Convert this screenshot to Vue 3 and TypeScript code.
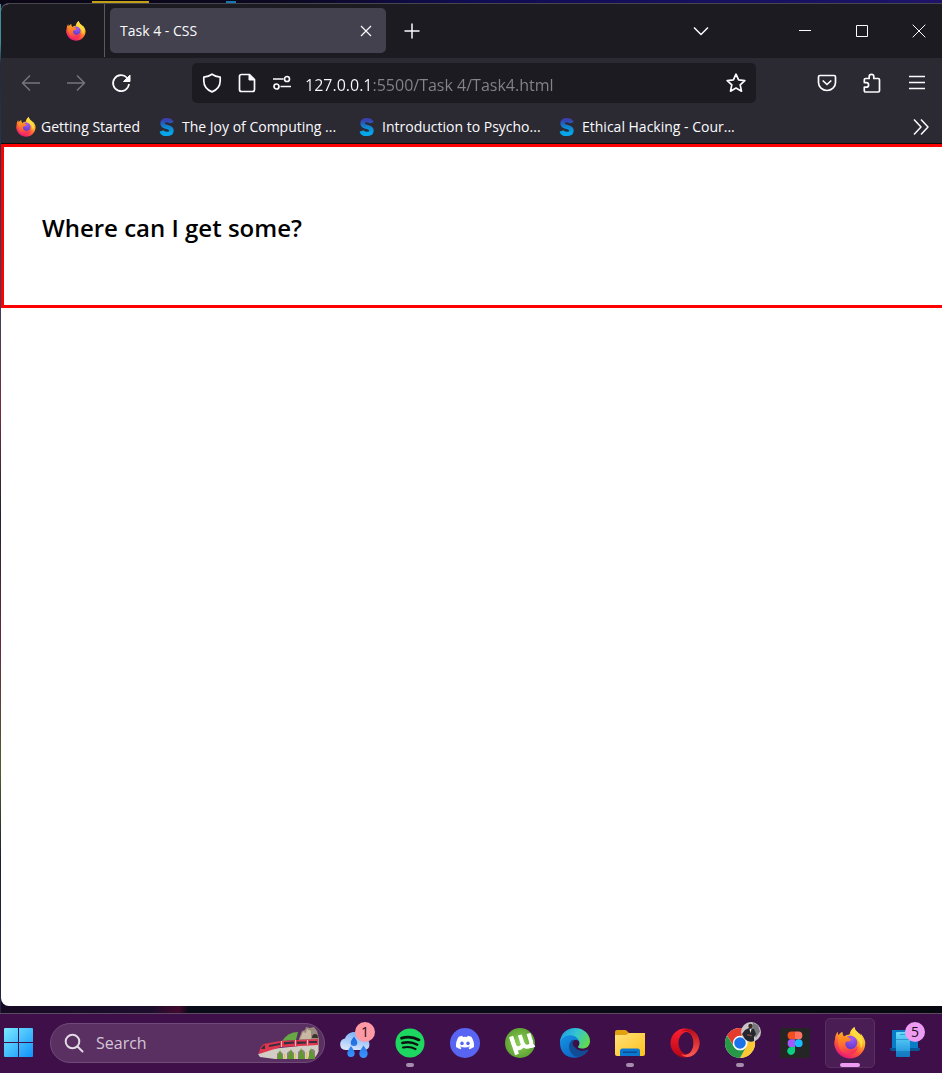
<script setup lang="ts">
import { ref } from 'vue'

interface Bookmark {
  title: string
  icon: string
  full: boolean
}

interface TaskApp {
  name: string
  icon: string
  state?: 'open' | 'active'
  badge?: string
  tone?: string
}

const address = ref('127.0.0.1:5500/Task 4/Task4.html')
const query = ref('')

const bookmarks: Bookmark[] = [
  { title: 'Getting Started', icon: 'firefox', full: true },
  { title: 'The Joy of Computing ...', icon: 'swayam', full: false },
  { title: 'Introduction to Psycho...', icon: 'swayam', full: false },
  { title: 'Ethical Hacking - Cour...', icon: 'swayam', full: false },
]

const apps: TaskApp[] = [
  { name: 'Weather', icon: 'weather', badge: '1', tone: 'coral' },
  { name: 'Spotify', icon: 'spotify', state: 'open' },
  { name: 'Discord', icon: 'discord' },
  { name: 'uTorrent', icon: 'utorrent' },
  { name: 'Edge', icon: 'edge' },
  { name: 'File Explorer', icon: 'folder', state: 'open' },
  { name: 'Opera', icon: 'opera' },
  { name: 'Chrome', icon: 'chrome', state: 'open' },
  { name: 'Figma', icon: 'figma' },
  { name: 'Firefox', icon: 'firefox', state: 'active' },
  { name: 'Phone Link', icon: 'phone', badge: '5', tone: 'orchid' },
]
</script>

<template>
  <div class="desktop">
    <svg class="sprite" aria-hidden="true">
      <defs>
        <linearGradient id="ff-body" x1="0.8" y1="0.05" x2="0.3" y2="1">
          <stop offset="0" stop-color="#fff44f" />
          <stop offset="0.35" stop-color="#ffb02a" />
          <stop offset="0.65" stop-color="#ff5a36" />
          <stop offset="1" stop-color="#e6107f" />
        </linearGradient>
        <linearGradient id="ff-fox" x1="0.3" y1="0" x2="0.5" y2="1">
          <stop offset="0" stop-color="#ff9a1f" />
          <stop offset="0.5" stop-color="#ff6a32" />
          <stop offset="1" stop-color="#f52a62" />
        </linearGradient>
        <radialGradient id="ff-globe" cx="0.6" cy="0.2" r="0.9">
          <stop offset="0" stop-color="#a45cf5" />
          <stop offset="1" stop-color="#5b35c4" />
        </radialGradient>
        <linearGradient id="sw" x1="0" y1="0" x2="0" y2="1">
          <stop offset="0" stop-color="#3a3fae" />
          <stop offset="0.5" stop-color="#0f86cf" />
          <stop offset="1" stop-color="#04a8ec" />
        </linearGradient>
        <linearGradient id="win" x1="0" y1="0" x2="1" y2="1">
          <stop offset="0" stop-color="#7beaff" />
          <stop offset="1" stop-color="#0f93fb" />
        </linearGradient>
        <linearGradient id="cloud" x1="0.6" y1="0" x2="0.3" y2="1">
          <stop offset="0" stop-color="#78b0fa" />
          <stop offset="0.5" stop-color="#a9cbfb" />
          <stop offset="1" stop-color="#dbe6f8" />
        </linearGradient>
        <linearGradient id="drop" x1="0" y1="0" x2="0" y2="1">
          <stop offset="0" stop-color="#1d66d8" />
          <stop offset="1" stop-color="#3a95ff" />
        </linearGradient>
        <radialGradient id="ut">
          <stop offset="0" stop-color="#8fcf5c" />
          <stop offset="1" stop-color="#5fa332" />
        </radialGradient>
        <linearGradient id="edge-top" x1="0" y1="0.2" x2="1" y2="0.6">
          <stop offset="0" stop-color="#1b9de2" />
          <stop offset="0.5" stop-color="#35c5d2" />
          <stop offset="1" stop-color="#61dc4b" />
        </linearGradient>
        <linearGradient id="edge-left" x1="0" y1="0" x2="0.6" y2="1">
          <stop offset="0" stop-color="#1698e6" />
          <stop offset="1" stop-color="#0c65c6" />
        </linearGradient>
        <linearGradient id="fold" x1="0" y1="0" x2="1" y2="1">
          <stop offset="0" stop-color="#ffe07a" />
          <stop offset="1" stop-color="#fdc21c" />
        </linearGradient>
        <linearGradient id="op" x1="0" y1="0" x2="0" y2="1">
          <stop offset="0" stop-color="#ff1f30" />
          <stop offset="1" stop-color="#b50716" />
        </linearGradient>
        <linearGradient id="op2" x1="0" y1="0" x2="0" y2="1">
          <stop offset="0" stop-color="#b80d17" />
          <stop offset="1" stop-color="#ff5a52" />
        </linearGradient>
        <linearGradient id="ph" x1="0" y1="0" x2="0" y2="1">
          <stop offset="0" stop-color="#68dcfa" />
          <stop offset="1" stop-color="#1689d8" />
        </linearGradient>
      </defs>

      <symbol id="firefox" viewBox="0 0 32 32">
        <path fill="url(#ff-body)" d="M29.700 11.100C28.900 9.200 27.600 7.500 26.300 6.600c.5 1 .7 1.800.8 2.500C25.500 5.500 20.900 4.800 20.400 0c-3.200 1.900-4.600 5.200-4.800 7.600-2 .1-3.900.8-5.400 1.900C8.700 8.500 8.400 5.400 8.500 4.700 6.400 5.700 5.200 7 4.500 8.200 3.800 7.300 3.800 5.600 3.900 4.600 1.900 6.700 1 9.600 1 12.300c-1 2.500-.7 5.600-.3 7C2.400 26.500 8.600 31.500 16 31.500c8.400 0 15.300-6.600 15.300-15.200 0-1.900-.7-3.700-1.600-5.200z" />
        <circle cx="16.500" cy="15.500" r="6.800" fill="url(#ff-globe)" />
        <path fill="url(#ff-fox)" d="M4.500 8.200c1.500-.6 3.400-.5 5.700 1.300 1.400-.2 2.800.1 4.100.8 1.700.9 2.500 2 2.500 2.600 0 1-1.900 1.500-3.600 1.700-1 .2-1.700 1.200-2 2.500.5 3.500 3 5.200 6 5.200 3 0 5-1.600 6.300-3.800.8 3.500-1 7-4.500 8.500-2.500.8-5.500.8-8 0C6.400 25.500 4 20.200 4 13.800c0-2.200.1-4 .5-5.600z" />
        <path fill="#ffdc3d" d="M20.400 0c.5 4.800 5.100 5.500 6.700 9.100 2.200 4.400 1.900 9-.3 12.400 0-3.500-.8-6.300-3-9-2-2.300-4.900-2.900-6.500-5.800-.1-2.500 1.300-5.400 3.100-6.700z" />
      </symbol>
      <symbol id="swayam" viewBox="0 0 20 20">
        <path d="M14.500 5.800C14 3.900 12.500 3.100 10 3.100c-2.900 0-4.500 1.300-4.500 3.300 0 4.600 9 2.400 9 7 0 2.200-1.900 3.500-4.900 3.500-2.800 0-4.400-1-4.900-3" fill="none" stroke="url(#sw)" stroke-width="4.400" />
      </symbol>
      <symbol id="windows" viewBox="0 0 30 30">
        <path fill="url(#win)" d="M1 0h13v14H0V1q0-1 1-1zM15 0h13q1 0 1 1v13H15zM0 15h14v14H1q-1 0-1-1zM15 15h14v13q0 1-1 1H15z" />
      </symbol>
      <symbol id="weather" viewBox="0 0 32 32">
        <path fill="url(#cloud)" d="M6.500 23a5.800 5.800 0 0 1-.5-11.500C7.500 7.500 11 5 15.500 5c5 0 8.500 2.800 9.800 6.500A5.800 5.800 0 0 1 25.500 23z" />
        <path fill="url(#drop)" d="M15 9.500c2 2.800 3.300 4.500 3.300 6.200a3.300 3.300 0 0 1-6.600 0c0-1.700 1.300-3.400 3.300-6.200zM12 19c2 3 3.700 5 3.700 7.300a3.700 3.700 0 0 1-7.400 0C8.300 24 10 22 12 19zM24.500 18.500c2.500 3.500 4.200 5.500 4.200 8.200a4.200 4.200 0 0 1-8.400 0c0-2.700 1.700-4.700 4.200-8.200z" />
      </symbol>
      <symbol id="spotify" viewBox="0 0 32 32">
        <circle cx="16" cy="16" r="14.500" fill="#1ed760" />
        <g fill="none" stroke="#0b1410" stroke-linecap="round">
          <path d="M7.500 11.200c5.500-1.700 12.500-1 17.500 1.700" stroke-width="2.800" />
          <path d="M8.300 16c5-1.400 10.500-.8 15 1.700" stroke-width="2.400" />
          <path d="M9 20.500c4.300-1.100 8.800-.6 12.600 1.600" stroke-width="2" />
        </g>
      </symbol>
      <symbol id="discord" viewBox="0 0 32 32">
        <circle cx="16" cy="16" r="15" fill="#5865f2" />
        <path fill="#fff" d="M22.300 9.800A15 15 0 0 0 18.700 8.700l-.6 1.200a14 14 0 0 0-4.200 0l-.6-1.200a15 15 0 0 0-3.600 1.100C7.400 13.200 6.800 16.600 7 20a15 15 0 0 0 4.600 2.300l1-1.600-1.500-.8.4-.3c2.900 1.300 6.100 1.300 9 0l.4.3-1.500.8 1 1.600A15 15 0 0 0 25 20c.4-3.900-.7-7.300-2.700-10.200z" />
        <ellipse cx="13" cy="16.300" rx="1.700" ry="1.900" fill="#5865f2" />
        <ellipse cx="19" cy="16.300" rx="1.700" ry="1.900" fill="#5865f2" />
      </symbol>
      <symbol id="utorrent" viewBox="0 0 32 32">
        <circle cx="16" cy="16" r="15" fill="url(#ut)" />
        <path d="M7 9.500l6 18" fill="none" stroke="#fff" stroke-width="4" />
        <path d="M7.500 10.500l2.500 7.500q2 4.500 6 2.800t2.300-5l-2.500-7.800M18.500 16q2.200 4.800 6 3.500t2.500-5L24.500 6.500" fill="none" stroke="#fff" stroke-width="4" />
        <path d="M25 19.500q3 .5 5.500-1.200" fill="none" stroke="#fff" stroke-width="3" />
      </symbol>
      <symbol id="edge" viewBox="0 0 32 32">
        <path fill="url(#edge-left)" d="M1 16C1 8 8 5 14 7c5 1.500 7 5 6.500 8-1-1.500-2.700-2.300-4.500-2-4 .5-5.500 5-3.500 9 2.200 4.400 7.500 6.800 11.500 5.500C17 34 1 31 1 16z" />
        <path fill="url(#edge-top)" d="M1 15C1.500 6.500 8 1 16 1c9 0 15 6.500 15 13 0 5-3.500 7.500-7.500 7.500-3.500 0-5.500-1.300-4-2.800 1.500-1.700 1-5-1-7.200C13.500 6 4 8 1 15z" />
        <path fill="#124c94" d="M12.500 13.500C9 17 9.500 23.500 13.500 27.500c4.500 4 12 2.500 15.800-4.300.3-.7-.2-1-.8-.6-5 2.500-11 1.300-13-2.800-1-2.200-.7-4.500.5-6.500-1.200-.8-2.500-.6-3.500.2z" />
        <circle cx="17" cy="16.500" r="3.200" fill="#3f0f49" />
      </symbol>
      <symbol id="folder" viewBox="0 0 32 32">
        <path fill="#e0a010" d="M1 5q0-2 2-2h8q1 0 2 1l2 2h14q1 0 1 1v10H1z" />
        <path fill="url(#fold)" d="M1 8h11l3-2h16v21q0 2-2 2H3q-2 0-2-2z" />
        <path fill="#0b78d1" d="M6 29v-5q0-2.500 2.500-2.500h15Q26 21.500 26 24v5z" />
        <path fill="#0a4d94" d="M9 24.500h14v1.500H9z" />
      </symbol>
      <symbol id="opera" viewBox="0 0 32 32">
        <path fill="url(#op)" fill-rule="evenodd" d="M16 1.500a14.500 14.500 0 0 0 0 29 14.500 14.500 0 0 0 0-29zM17.500 5c4 0 7 5 7 11s-3 11-7 11-8-5-8-11 4-11 8-11z" />
        <path fill="url(#op2)" d="M12 5C15 1.500 20.500 1.200 24.500 4c3.700 2.700 6 7.200 6 12s-2.300 9.300-6 12c-4 2.800-9.500 2.500-12.500-1 8 3.500 12.500-4 12.500-11S20 1.500 12 5z" />
      </symbol>
      <symbol id="chrome" viewBox="0 0 32 32">
        <circle cx="16" cy="16" r="15" fill="#fff" />
        <path fill="#e33b2e" d="M3 8.500a15 15 0 0 1 26 0L16 9.200a7 7 0 0 0-6 10.300z" />
        <path fill="#fcc934" d="M29 8.500A15 15 0 0 1 16 31l6.200-11.500A7 7 0 0 0 16 8.500z" />
        <path fill="#279847" d="M3 8.500A15 15 0 0 0 16 31l6.300-11.300A7 7 0 0 1 10 19.700z" />
        <circle cx="16" cy="16" r="7.200" fill="#fff" />
        <circle cx="16" cy="16" r="5.800" fill="#1a73e8" />
      </symbol>
      <symbol id="figma" viewBox="0 0 32 32">
        <path fill="#252525" d="M1 1h30v30H1z" />
        <path fill="#f24e1e" d="M16 4.500h-3.500a3.900 3.900 0 0 0 0 7.800H16z" />
        <path fill="#ff7262" d="M16 4.500h3.500a3.900 3.900 0 0 1 0 7.800H16z" />
        <path fill="#a259ff" d="M16 12.300h-3.500a3.900 3.900 0 0 0 0 7.800H16z" />
        <circle cx="19.700" cy="16.200" r="3.900" fill="#1abcfe" />
        <path fill="#0acf83" d="M16 20.100h-3.500a3.900 3.900 0 1 0 3.500 3.900z" />
      </symbol>
      <symbol id="phone" viewBox="0 0 32 32">
        <path fill="#087cc6" d="M3 3h26v18H3z" />
        <path fill="#0a5596" d="M1 21h30v1q0 2-2 2H3q-2 0-2-2z" />
        <path fill="url(#ph)" d="M8 5h12q1 0 1 1v23q0 1-1 1H8q-1 0-1-1V6q0-1 1-1z" />
        <path fill="#0d67ae" d="M11 7h5v1h-5zM7 12h14v1H7zM7 24h14v6H7z" opacity="0.500" />
      </symbol>
    </svg>

    <main class="window">
      <header class="tabs">
        <button class="pin" aria-label="Firefox View">
          <svg viewBox="0 0 32 32"><use href="#firefox" /></svg>
        </button>
        <div class="tab">
          <span class="tab-title">Task 4 - CSS</span>
          <button class="tab-close" aria-label="Close tab">
            <svg viewBox="0 0 12 12"><path d="M1 1l10 10M11 1L1 11" /></svg>
          </button>
        </div>
        <button class="new-tab" aria-label="New tab">
          <svg viewBox="0 0 16 16"><path d="M8 .500v15M.5 8h15" /></svg>
        </button>
        <button class="list-tabs" aria-label="List all tabs">
          <svg viewBox="0 0 16 16"><path d="M1 4.500l7 7 7-7" /></svg>
        </button>
        <div class="controls">
          <button aria-label="Minimize"><svg class="thin" viewBox="0 0 14 14"><path d="M1 6.500h12" /></svg></button>
          <button aria-label="Maximize"><svg class="thin" viewBox="0 0 14 14"><path d="M1.500 1.500h11v11h-11z" /></svg></button>
          <button aria-label="Close window"><svg class="thin" viewBox="0 0 14 14"><path d="M.7.700l12.600 12.600M13.300.700L.7 13.300" /></svg></button>
        </div>
      </header>

      <nav class="toolbar" aria-label="Navigation">
        <div class="group">
          <button class="dim" aria-label="Back"><svg viewBox="0 0 20 20"><path d="M19 10H1.500M9 2.500L1.500 10 9 17.500" /></svg></button>
          <button class="dim" aria-label="Forward"><svg viewBox="0 0 20 20"><path d="M1 10h17.500M11 2.500l7.500 7.500-7.500 7.500" /></svg></button>
          <button aria-label="Reload">
            <svg class="bold" viewBox="0 0 20 20"><path d="M16 4.800A8 8 0 1 0 18 11" /><path class="tip" d="M19 2v6.500h-6.500z" /></svg>
          </button>
        </div>
        <div class="urlbar">
          <button aria-label="Tracking protection"><svg class="bold" viewBox="0 0 20 20"><path d="M10 1.200c2.500 1.700 5 2.500 8.200 3v3.500c0 5-3 9-8.200 11.200-5.200-2.200-8.200-6.200-8.200-11.200V4.200c3.200-.5 5.700-1.300 8.200-3z" /></svg></button>
          <button aria-label="Site information"><svg class="bold" viewBox="0 0 20 20"><path d="M4.500 1.500h8l5 5v10q0 2-2 2h-11q-2 0-2-2v-13q0-2 2-2z" /><path class="tip" d="M12 1.500v5.500h5.500z" /></svg></button>
          <button aria-label="Permissions"><svg class="bold" viewBox="0 0 20 20"><path d="M1 6h10.500M8.500 13.500H19" /><circle cx="15" cy="6" r="2.500" /><circle cx="4.500" cy="13.500" r="2.500" /></svg></button>
          <input v-model="address" class="address" type="text" aria-label="Address" spellcheck="false" />
          <button aria-label="Bookmark this page"><svg class="bold" viewBox="0 0 20 20"><path d="M10 1.200l2.600 5.700 6.200.7-4.600 4.200 1.300 6.400L10 15.100l-5.500 3.100 1.300-6.400L1.200 7.600l6.200-.7z" /></svg></button>
        </div>
        <div class="group">
          <button aria-label="Save to Pocket"><svg class="bold" viewBox="0 0 20 20"><path d="M3 2.500h14q1.500 0 1.500 1.500v5.500a8.500 8 0 0 1-17 0V4q0-1.500 1.500-1.500z" /><path d="M5.700 7.500L10 11.500l4.300-4" /></svg></button>
          <button aria-label="Extensions"><svg class="bold" viewBox="0 0 20 20"><path d="M3.500 19q-1.200 0-1.200-1.200v-3.600h2a2.300 2.300 0 0 0 0-4.600h-2V6.800q0-1.300 1.200-1.300h3.700V3.600a2.300 2.300 0 0 1 4.600 0v1.900h4.400q1.300 0 1.300 1.300v11q0 1.200-1.300 1.200z" /></svg></button>
          <button aria-label="Menu"><svg viewBox="0 0 20 20"><path d="M2 3.500h16M2 9.500h16M2 15.500h16" /></svg></button>
        </div>
      </nav>

      <nav class="bookmarks" aria-label="Bookmarks">
        <a v-for="mark in bookmarks" :key="mark.title" href="#" class="mark" :class="{ full: mark.full }">
          <svg viewBox="0 0 20 20"><use :href="'#' + mark.icon" /></svg>
          <span>{{ mark.title }}</span>
        </a>
        <button class="more" aria-label="More bookmarks"><svg viewBox="0 0 18 18"><path d="M2 1.500L9 9l-7 7.500M9 1.500L16 9l-7 7.500" /></svg></button>
      </nav>

      <section class="page">
        <div class="box"><h2>Where can I get some?</h2></div>
      </section>
    </main>

    <footer class="taskbar">
      <button class="start" aria-label="Start"><svg viewBox="0 0 30 30"><use href="#windows" /></svg></button>
      <label class="search">
        <svg class="lens" viewBox="0 0 20 20"><circle cx="8.500" cy="8.500" r="6.800" /><path d="M13.500 13.500l5 5" /></svg>
        <input v-model="query" type="search" placeholder="Search" aria-label="Search" />
        <svg class="train" viewBox="0 0 64 36">
          <path fill="#9a8c7c" d="M42 14l3-8 3-1 1-3 4 1 4-1 3 4 2 8v13H42z" />
          <path fill="#c9b9a2" d="M43 14l3-7 3 1 1-4 4 2v8z" />
          <path fill="#3a322e" d="M55 13q0-4 3-4t3 4z" />
          <path fill="#65a844" d="M25 16q6-9 16-9l-2 8z" />
          <path fill="#d3cec5" d="M1 29l13-5 47-5v9l-4 6H18L3 32z" />
          <path fill="#8d8175" d="M20 34v-5q3-5 6 0v5zM30 34v-6q4-5 7 0v6zM41 34v-7q4-5 7 0v7zM52 34v-8q4-4 6 0v8z" />
          <path fill="#5f9a2c" d="M20 34l3-9 3 9zM30 34l4-10 3 10zM41 34l3-11 4 11zM51 34l3-11 4 11z" />
          <path fill="#e5c642" d="M27 29h1v5h-1zM38 28h1v6h-1zM49 27h1v7h-1z" />
          <path fill="#e0344f" d="M2 28q1-7 5-9l16-3 38-2v6l-37 2-19 6q-2 1-3 0z" />
          <path fill="#33313f" d="M4 24q1-3 4-4v4zM12 20l11-2v2l-11 2zM27 17l10-.500v2l-10 1zM40 16.500h9v2l-9 .500zM52 16h8v2h-8z" />
          <path fill="#f0b7bd" d="M24 16h1v6h-1zM38 15h1v6h-1zM50 15h1v5h-1z" />
        </svg>
      </label>
      <button v-for="app in apps" :key="app.name" class="app" :class="app.state" :aria-label="app.name">
        <svg class="glyph" viewBox="0 0 32 32"><use :href="'#' + app.icon" /></svg>
        <span v-if="app.badge" class="badge" :class="app.tone">{{ app.badge }}</span>
        <svg v-if="app.icon === 'chrome'" class="avatar" viewBox="0 0 20 20">
          <circle cx="10" cy="10" r="10" fill="#c8c5c8" />
          <path fill="#77787b" d="M12 .500l5 3 2 6-4 6-4-5z" />
          <path fill="#24252d" d="M4 8l4-2 5 1 2 5-2 3v4q-5 2-9-2l-3-5z" />
          <circle cx="9.500" cy="4" r="2.200" fill="#3e2a25" />
          <path fill="#eee" d="M8.500 7h2l-1 4z" />
          <path fill="#754e42" d="M6 12l5 1v1.500l-5-1z" />
        </svg>
      </button>
    </footer>
  </div>
</template>

<style>
body {
  margin: 0;
}
</style>

<style scoped>
.desktop {
  display: flex;
  flex-direction: column;
  min-height: 100vh;
  overflow: hidden;
  font-family: "Open Sans", "Noto Sans", sans-serif;
  background:
    linear-gradient(#c4a014, #c4a014) 92px 1px / 57px 3px no-repeat,
    linear-gradient(#1479ae, #1479ae) 226px 1px / 10px 3px no-repeat,
    linear-gradient(90deg, #0b0716, #0b0820 30%, #100c52 50%, #1d1468) 0 0 / 100% 4px no-repeat,
    linear-gradient(#3c8f9b 4%, #26283c 6%, #1c4a6c 24%, #7a2b3c 38%, #20222f 48%, #6b2840 60%, #4f5d2c 72%, #1d2030 80%, #26294e) 0 0 / 1px 100% no-repeat,
    linear-gradient(90deg, #170a24, #1b0d2c 16%, #42092e 19%, #0a0b18 20%, #07080f);
}

.sprite {
  position: absolute;
  width: 0;
  height: 0;
}

button {
  display: flex;
  align-items: center;
  justify-content: center;
  flex: none;
  margin: 0;
  padding: 0;
  border: 0;
  background: none;
  color: #fbfbfe;
  font: inherit;
}

svg {
  display: block;
  flex: none;
}

button svg {
  fill: none;
  stroke: currentColor;
  stroke-width: 1.5;
  stroke-linejoin: round;
}

.pin svg,
.start svg,
.app svg {
  stroke: none;
  fill: currentColor;
}

.window {
  display: flex;
  flex: 1;
  flex-direction: column;
  overflow: hidden;
  margin: 3px 0 7px 1px;
  border-top: 1px solid #47464d;
  border-radius: 8px 0 0 8px;
  background: #fff;
}

.tabs {
  display: flex;
  align-items: center;
  height: 54px;
  padding-bottom: 1px;
  box-sizing: border-box;
  background: #1c1b22;
}

.pin {
  align-self: stretch;
  width: 104px;
  padding-left: 46px;
  border-right: 1px solid #5a5960;
}

.pin svg {
  width: 20px;
  height: 20px;
}

.tab {
  display: flex;
  align-items: center;
  justify-content: space-between;
  flex: 0 1 276px;
  height: 45px;
  margin-left: 5px;
  padding: 0 10px;
  box-sizing: border-box;
  border-radius: 5px;
  background: #42414d;
  color: #fbfbfe;
  font-size: 14px;
}

.tab-close {
  width: 20px;
  height: 20px;
}

.tab-close svg {
  width: 12px;
  height: 12px;
  stroke-width: 1.2;
}

.new-tab {
  width: 44px;
  height: 44px;
  margin-left: 4px;
}

.new-tab svg,
.list-tabs svg {
  width: 16px;
  height: 16px;
}

.list-tabs {
  width: 44px;
  height: 44px;
  margin-left: auto;
  margin-right: 53px;
}

.controls {
  display: flex;
  margin-right: -5px;
}

.controls button {
  width: 57px;
  height: 44px;
}

.thin {
  width: 14px;
  height: 14px;
}

button .thin {
  stroke-width: 1;
}

.toolbar {
  display: flex;
  align-items: center;
  height: 50px;
  padding: 0 3px 0 8px;
  background: #2b2a33;
}

.group {
  display: flex;
  gap: 1px;
}

.group button {
  width: 44px;
  height: 40px;
}

.group svg,
.urlbar svg {
  width: 20px;
  height: 20px;
}

.group .dim {
  color: #76757c;
}

button .bold {
  stroke-width: 1.7;
}

button .tip {
  fill: currentColor;
  stroke-width: 1;
}

.urlbar {
  display: flex;
  align-items: center;
  flex: 1;
  min-width: 0;
  height: 40px;
  margin: 0 49px;
  padding: 0 3px 0 2px;
  border-radius: 5px;
  background: #1c1b22;
}

.urlbar button {
  width: 35px;
  height: 35px;
}

.address {
  flex: 1;
  min-width: 0;
  height: 36px;
  margin: 0;
  padding: 4px 0 0 6px;
  box-sizing: border-box;
  border: 0;
  outline: 0;
  background: linear-gradient(90deg, #fbfbfe 73px, #85848b 73px);
  background-clip: text;
  -webkit-background-clip: text;
  color: transparent;
  font-family: inherit;
  font-size: 16px;
}

.bookmarks {
  display: flex;
  align-items: center;
  gap: 15px;
  height: 33px;
  padding: 2px 12px 0 15px;
  border-bottom: 1px solid #0c0c0d;
  background: #2b2a33;
}

.mark {
  display: flex;
  align-items: center;
  flex: 0 1 185px;
  gap: 5px;
  color: #fbfbfe;
  font-size: 14px;
  line-height: 20px;
  text-decoration: none;
  white-space: nowrap;
}

.mark.full {
  flex-basis: 126px;
}

.mark svg {
  width: 20px;
  height: 20px;
}

.more {
  margin-left: auto;
}

.more svg {
  width: 18px;
  height: 18px;
}

.box {
  display: flex;
  align-items: center;
  height: 154px;
  padding: 4px 0 0 38px;
  border: 3px solid #f00;
  border-right: 0;
}

.box h2 {
  margin: 0;
  color: #000;
  font-size: 24px;
  font-weight: 600;
  line-height: 32px;
}

.taskbar {
  display: flex;
  align-items: center;
  height: 60px;
  padding-bottom: 1px;
  box-sizing: border-box;
  border-top: 1px solid #5c4a63;
  background: #3f0f49;
}

.start {
  width: 38px;
  height: 50px;
  margin-right: 12px;
}

.start svg {
  width: 30px;
  height: 30px;
}

.search {
  display: flex;
  align-items: center;
  flex: 0 1 275px;
  min-width: 0;
  height: 40px;
  margin-right: 5px;
  padding: 0 3px 0 13px;
  box-sizing: border-box;
  border: 1px solid #6f4c78;
  border-radius: 20px;
  background: #5a3062;
}

.lens {
  width: 20px;
  height: 20px;
  fill: none;
  stroke: #e2dae4;
  stroke-width: 2;
  stroke-linecap: round;
}

.search input {
  flex: 1 1 0;
  width: 0;
  min-width: 0;
  margin: 0;
  padding: 0 0 0 12px;
  border: 0;
  outline: 0;
  background: none;
  color: #fff;
  font-family: inherit;
  font-size: 16px;
}

.search input::placeholder {
  color: #d3c6d6;
  opacity: 1;
}

.train {
  width: 64px;
  height: 36px;
}

.app {
  position: relative;
  width: 50px;
  height: 50px;
  margin-right: 5px;
  box-sizing: border-box;
  border: 1px solid transparent;
  border-radius: 5px;
}

.app:last-child {
  margin-right: 0;
}

.glyph {
  width: 32px;
  height: 32px;
}

.app.active {
  border-color: #58305f;
  background: #4a1d54;
}

.app.open::after,
.app.active::after {
  content: "";
  position: absolute;
  bottom: 0;
  left: 50%;
  width: 8px;
  height: 4px;
  border-radius: 2px;
  background: #a58dab;
  transform: translateX(-50%);
}

.app.active::after {
  width: 20px;
  background: #ee9bf2;
}

.badge {
  position: absolute;
  top: 3px;
  right: 4px;
  width: 20px;
  height: 20px;
  border-radius: 50%;
  color: #1b0f1c;
  font-size: 14px;
  line-height: 20px;
  text-align: center;
}

.coral {
  background: #ff99a4;
}

.orchid {
  background: #ee9bf2;
}

.avatar {
  position: absolute;
  top: 3px;
  right: 3px;
  width: 20px;
  height: 20px;
}
</style>
